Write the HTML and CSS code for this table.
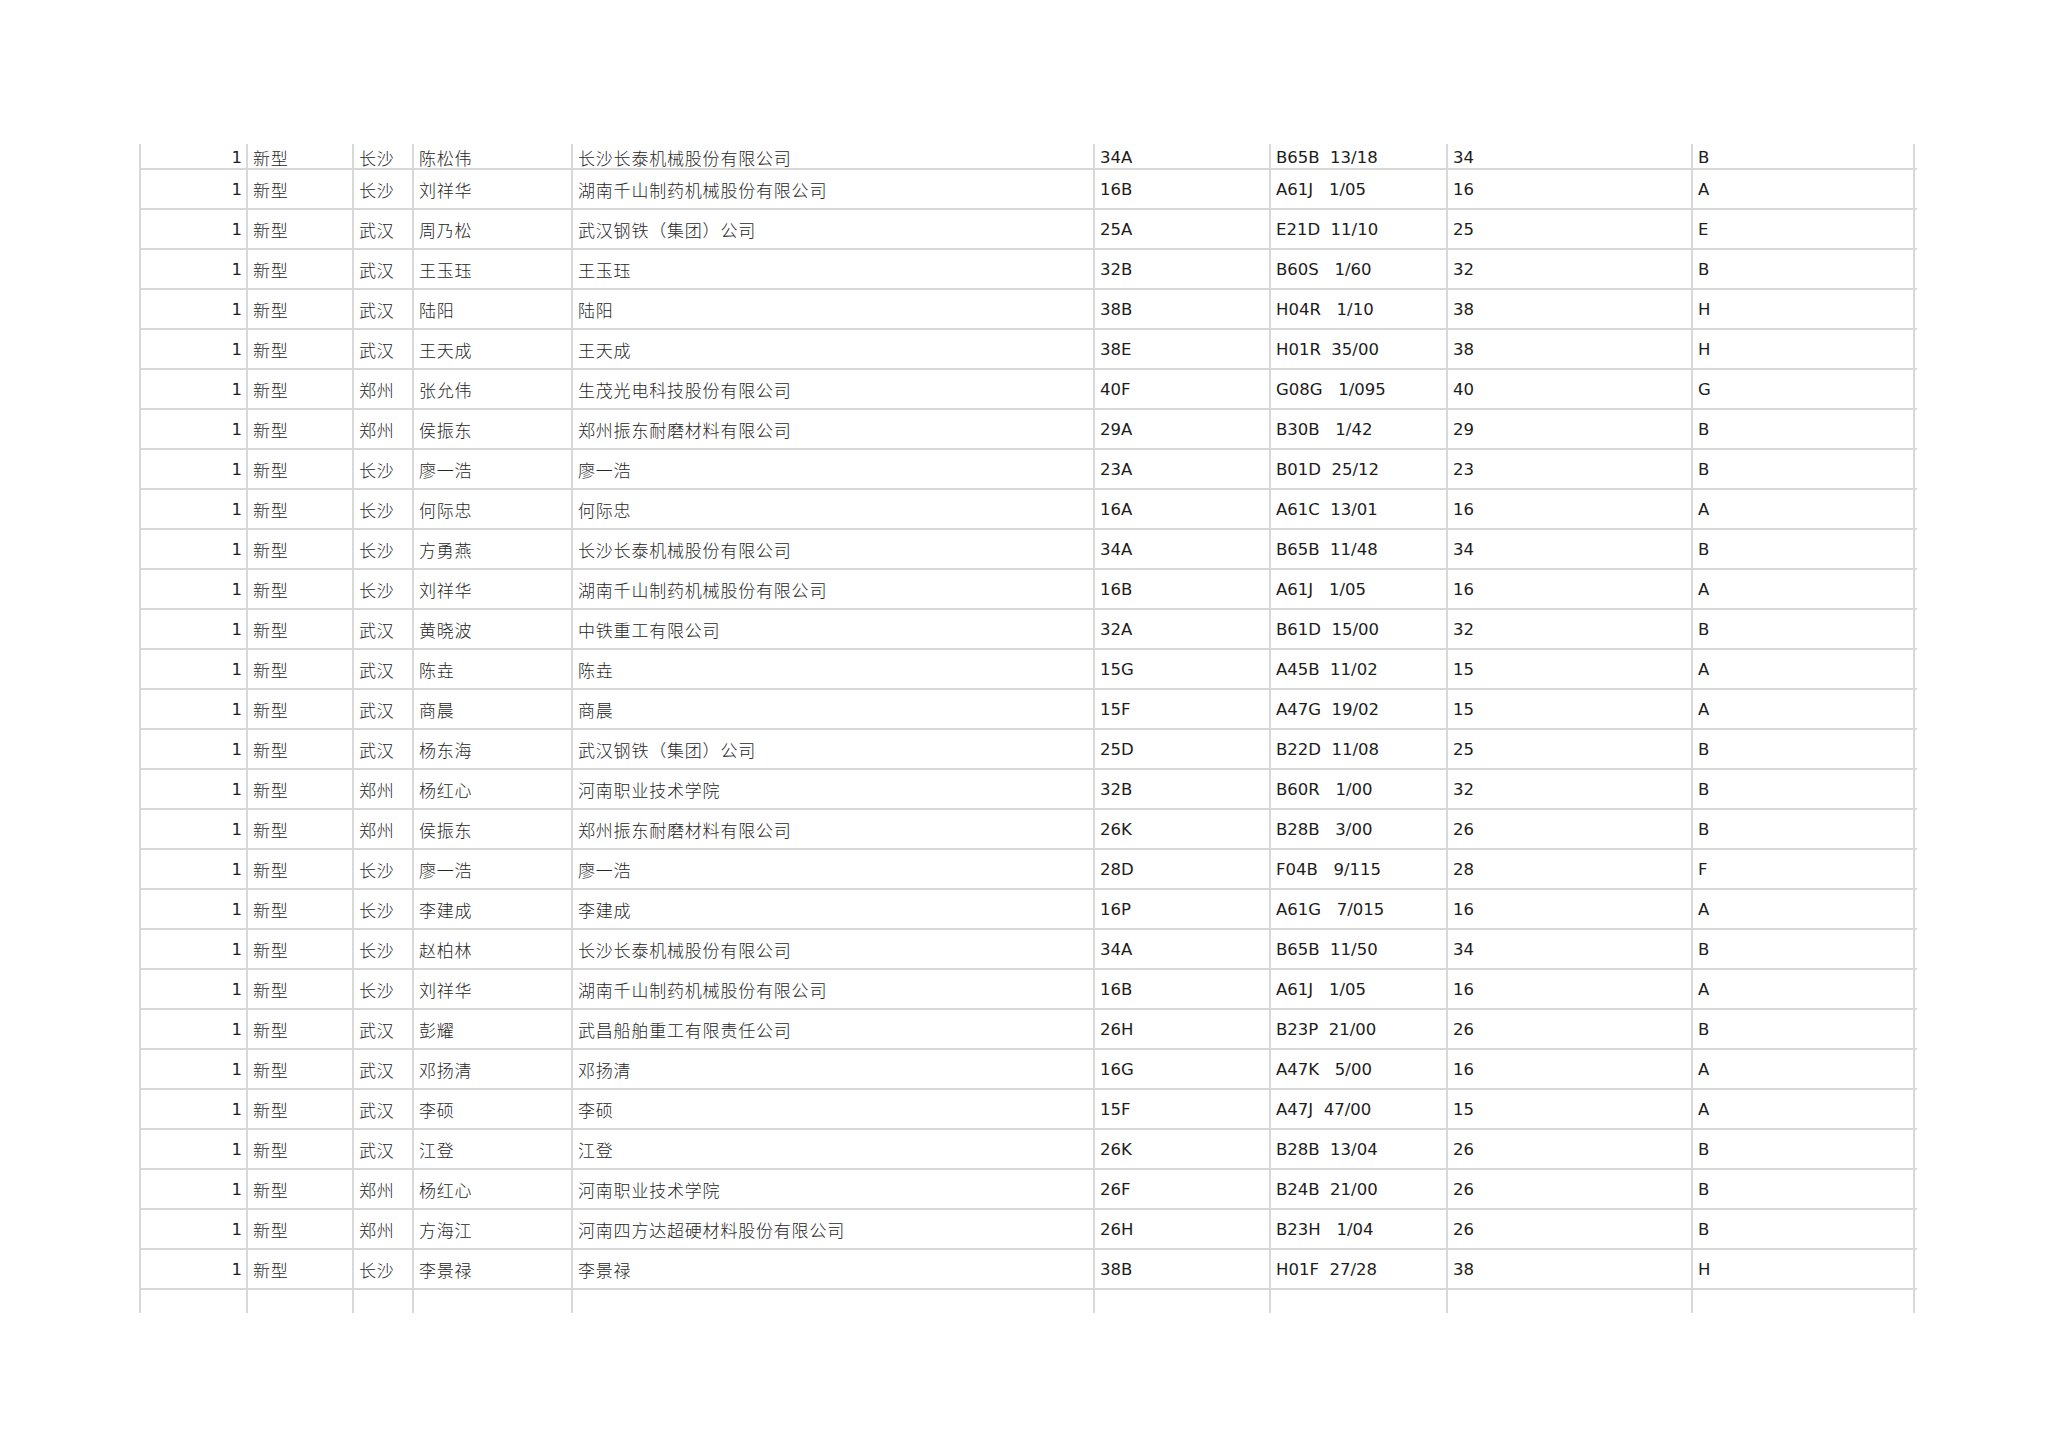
FILE: index.html
```html
<!DOCTYPE html>
<html lang="zh-CN">
<head>
<meta charset="utf-8">
<title>专利列表</title>
<link rel="stylesheet" href="styles.css">
</head>
<body>
<div class="page">
  <div class="sheet">
    <div class="row first"><div class="c n">1</div><div class="c zh">新型</div><div class="c zh">长沙</div><div class="c zh">陈松伟</div><div class="c zh">长沙长泰机械股份有限公司</div><div class="c">34A</div><div class="c pre">B65B  13/18</div><div class="c">34</div><div class="c">B</div></div>
    <div class="row"><div class="c n">1</div><div class="c zh">新型</div><div class="c zh">长沙</div><div class="c zh">刘祥华</div><div class="c zh">湖南千山制药机械股份有限公司</div><div class="c">16B</div><div class="c pre">A61J   1/05</div><div class="c">16</div><div class="c">A</div></div>
    <div class="row"><div class="c n">1</div><div class="c zh">新型</div><div class="c zh">武汉</div><div class="c zh">周乃松</div><div class="c zh">武汉钢铁（集团）公司</div><div class="c">25A</div><div class="c pre">E21D  11/10</div><div class="c">25</div><div class="c">E</div></div>
    <div class="row"><div class="c n">1</div><div class="c zh">新型</div><div class="c zh">武汉</div><div class="c zh">王玉珏</div><div class="c zh">王玉珏</div><div class="c">32B</div><div class="c pre">B60S   1/60</div><div class="c">32</div><div class="c">B</div></div>
    <div class="row"><div class="c n">1</div><div class="c zh">新型</div><div class="c zh">武汉</div><div class="c zh">陆阳</div><div class="c zh">陆阳</div><div class="c">38B</div><div class="c pre">H04R   1/10</div><div class="c">38</div><div class="c">H</div></div>
    <div class="row"><div class="c n">1</div><div class="c zh">新型</div><div class="c zh">武汉</div><div class="c zh">王天成</div><div class="c zh">王天成</div><div class="c">38E</div><div class="c pre">H01R  35/00</div><div class="c">38</div><div class="c">H</div></div>
    <div class="row"><div class="c n">1</div><div class="c zh">新型</div><div class="c zh">郑州</div><div class="c zh">张允伟</div><div class="c zh">生茂光电科技股份有限公司</div><div class="c">40F</div><div class="c pre">G08G   1/095</div><div class="c">40</div><div class="c">G</div></div>
    <div class="row"><div class="c n">1</div><div class="c zh">新型</div><div class="c zh">郑州</div><div class="c zh">侯振东</div><div class="c zh">郑州振东耐磨材料有限公司</div><div class="c">29A</div><div class="c pre">B30B   1/42</div><div class="c">29</div><div class="c">B</div></div>
    <div class="row"><div class="c n">1</div><div class="c zh">新型</div><div class="c zh">长沙</div><div class="c zh">廖一浩</div><div class="c zh">廖一浩</div><div class="c">23A</div><div class="c pre">B01D  25/12</div><div class="c">23</div><div class="c">B</div></div>
    <div class="row"><div class="c n">1</div><div class="c zh">新型</div><div class="c zh">长沙</div><div class="c zh">何际忠</div><div class="c zh">何际忠</div><div class="c">16A</div><div class="c pre">A61C  13/01</div><div class="c">16</div><div class="c">A</div></div>
    <div class="row"><div class="c n">1</div><div class="c zh">新型</div><div class="c zh">长沙</div><div class="c zh">方勇燕</div><div class="c zh">长沙长泰机械股份有限公司</div><div class="c">34A</div><div class="c pre">B65B  11/48</div><div class="c">34</div><div class="c">B</div></div>
    <div class="row"><div class="c n">1</div><div class="c zh">新型</div><div class="c zh">长沙</div><div class="c zh">刘祥华</div><div class="c zh">湖南千山制药机械股份有限公司</div><div class="c">16B</div><div class="c pre">A61J   1/05</div><div class="c">16</div><div class="c">A</div></div>
    <div class="row"><div class="c n">1</div><div class="c zh">新型</div><div class="c zh">武汉</div><div class="c zh">黄晓波</div><div class="c zh">中铁重工有限公司</div><div class="c">32A</div><div class="c pre">B61D  15/00</div><div class="c">32</div><div class="c">B</div></div>
    <div class="row"><div class="c n">1</div><div class="c zh">新型</div><div class="c zh">武汉</div><div class="c zh">陈垚</div><div class="c zh">陈垚</div><div class="c">15G</div><div class="c pre">A45B  11/02</div><div class="c">15</div><div class="c">A</div></div>
    <div class="row"><div class="c n">1</div><div class="c zh">新型</div><div class="c zh">武汉</div><div class="c zh">商晨</div><div class="c zh">商晨</div><div class="c">15F</div><div class="c pre">A47G  19/02</div><div class="c">15</div><div class="c">A</div></div>
    <div class="row"><div class="c n">1</div><div class="c zh">新型</div><div class="c zh">武汉</div><div class="c zh">杨东海</div><div class="c zh">武汉钢铁（集团）公司</div><div class="c">25D</div><div class="c pre">B22D  11/08</div><div class="c">25</div><div class="c">B</div></div>
    <div class="row"><div class="c n">1</div><div class="c zh">新型</div><div class="c zh">郑州</div><div class="c zh">杨红心</div><div class="c zh">河南职业技术学院</div><div class="c">32B</div><div class="c pre">B60R   1/00</div><div class="c">32</div><div class="c">B</div></div>
    <div class="row"><div class="c n">1</div><div class="c zh">新型</div><div class="c zh">郑州</div><div class="c zh">侯振东</div><div class="c zh">郑州振东耐磨材料有限公司</div><div class="c">26K</div><div class="c pre">B28B   3/00</div><div class="c">26</div><div class="c">B</div></div>
    <div class="row"><div class="c n">1</div><div class="c zh">新型</div><div class="c zh">长沙</div><div class="c zh">廖一浩</div><div class="c zh">廖一浩</div><div class="c">28D</div><div class="c pre">F04B   9/115</div><div class="c">28</div><div class="c">F</div></div>
    <div class="row"><div class="c n">1</div><div class="c zh">新型</div><div class="c zh">长沙</div><div class="c zh">李建成</div><div class="c zh">李建成</div><div class="c">16P</div><div class="c pre">A61G   7/015</div><div class="c">16</div><div class="c">A</div></div>
    <div class="row"><div class="c n">1</div><div class="c zh">新型</div><div class="c zh">长沙</div><div class="c zh">赵柏林</div><div class="c zh">长沙长泰机械股份有限公司</div><div class="c">34A</div><div class="c pre">B65B  11/50</div><div class="c">34</div><div class="c">B</div></div>
    <div class="row"><div class="c n">1</div><div class="c zh">新型</div><div class="c zh">长沙</div><div class="c zh">刘祥华</div><div class="c zh">湖南千山制药机械股份有限公司</div><div class="c">16B</div><div class="c pre">A61J   1/05</div><div class="c">16</div><div class="c">A</div></div>
    <div class="row"><div class="c n">1</div><div class="c zh">新型</div><div class="c zh">武汉</div><div class="c zh">彭耀</div><div class="c zh">武昌船舶重工有限责任公司</div><div class="c">26H</div><div class="c pre">B23P  21/00</div><div class="c">26</div><div class="c">B</div></div>
    <div class="row"><div class="c n">1</div><div class="c zh">新型</div><div class="c zh">武汉</div><div class="c zh">邓扬清</div><div class="c zh">邓扬清</div><div class="c">16G</div><div class="c pre">A47K   5/00</div><div class="c">16</div><div class="c">A</div></div>
    <div class="row"><div class="c n">1</div><div class="c zh">新型</div><div class="c zh">武汉</div><div class="c zh">李硕</div><div class="c zh">李硕</div><div class="c">15F</div><div class="c pre">A47J  47/00</div><div class="c">15</div><div class="c">A</div></div>
    <div class="row"><div class="c n">1</div><div class="c zh">新型</div><div class="c zh">武汉</div><div class="c zh">江登</div><div class="c zh">江登</div><div class="c">26K</div><div class="c pre">B28B  13/04</div><div class="c">26</div><div class="c">B</div></div>
    <div class="row"><div class="c n">1</div><div class="c zh">新型</div><div class="c zh">郑州</div><div class="c zh">杨红心</div><div class="c zh">河南职业技术学院</div><div class="c">26F</div><div class="c pre">B24B  21/00</div><div class="c">26</div><div class="c">B</div></div>
    <div class="row"><div class="c n">1</div><div class="c zh">新型</div><div class="c zh">郑州</div><div class="c zh">方海江</div><div class="c zh">河南四方达超硬材料股份有限公司</div><div class="c">26H</div><div class="c pre">B23H   1/04</div><div class="c">26</div><div class="c">B</div></div>
    <div class="row"><div class="c n">1</div><div class="c zh">新型</div><div class="c zh">长沙</div><div class="c zh">李景禄</div><div class="c zh">李景禄</div><div class="c">38B</div><div class="c pre">H01F  27/28</div><div class="c">38</div><div class="c">H</div></div>
    <div class="row last"><div class="c"></div><div class="c"></div><div class="c"></div><div class="c"></div><div class="c"></div><div class="c"></div><div class="c"></div><div class="c"></div><div class="c"></div></div>
  </div>
</div>
</body>
</html>
```

FILE: styles.css
```css
html, body {
  margin: 0;
  padding: 0;
  background: #ffffff;
}

.page {
  padding: 144px 0 0 139px;
  font-family: "DejaVu Sans", "Noto Sans CJK SC", sans-serif;
  font-size: 16.5px;
  color: #1c1c1c;
}

.sheet {
  width: 1776px;
  border-left: 2px solid #d8d8d8;
}

.row {
  display: grid;
  grid-template-columns: 107px 106px 60px 159px 522px 176px 177px 245px 222px;
  height: 40px;
  box-sizing: border-box;
  border-bottom: 2px solid #d8d8d8;
}

.row.first {
  height: 26px;
}

.row.last {
  height: 23px;
  border-bottom: none;
}

.c {
  border-right: 2px solid #d8d8d8;
  padding: 2px 0 0 5px;
  display: flex;
  align-items: center;
  white-space: nowrap;
  overflow: hidden;
  line-height: 20px;
}

.row.first .c {
  padding-top: 3px;
}

.c.n {
  justify-content: flex-end;
  padding-left: 0;
  padding-right: 4px;
}

.c.pre {
  white-space: pre;
}

.c.zh {
  font-family: "Noto Sans CJK SC", sans-serif;
  font-size: 17px;
  letter-spacing: 0.8px;
  font-weight: 300;
  color: #262626;
}
```
